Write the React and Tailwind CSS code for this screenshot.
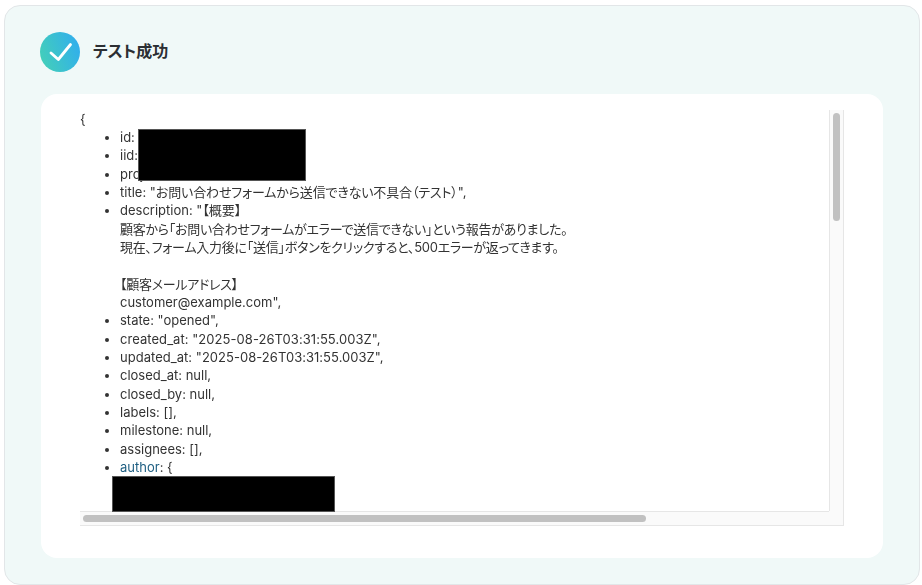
export default function App() {
  return (
    <div className="w-[922px] h-[585px] bg-white pt-[5px] pl-[4px] font-['Inter','Noto_Sans_CJK_JP',sans-serif] [font-feature-settings:'palt']">
      <div className="w-[916px] h-[580px] rounded-[16px] border border-[#e2e6e8] bg-[#f0f9f8] pt-[26px] pl-[35px]">
        <div className="flex items-center gap-[13px] h-[40px]">
          <div className="w-[40px] h-[40px] rounded-full bg-[linear-gradient(70deg,#45d2b4,#2fabf2)] flex items-center justify-center">
            <svg width="40" height="40" viewBox="0 0 40 40" fill="none">
              <path d="M11 21L18.3 27.5L30.5 12.5" stroke="white" strokeWidth="2.8" strokeLinecap="round" strokeLinejoin="round" />
            </svg>
          </div>
          <div className="text-[16px] font-semibold text-[#2b2f33] -mt-[3px]">テスト成功</div>
        </div>
        <div className="mt-[22px] ml-[1px] w-[842px] h-[464px] rounded-[16px] bg-white pt-[16px] pl-[39px]">
          <div className="relative w-[764px] h-[416px] grid grid-cols-[749px_15px] grid-rows-[401px_15px] overflow-hidden">
            <div className="overflow-hidden text-[13px] leading-[18.33px] text-[#333333] whitespace-nowrap transform-gpu">
              <div className="-mt-[0.4px]">{"{"}</div>
              <ul className="list-disc pl-[40px]">
                <li>id: </li>
                <li>iid: </li>
                <li>project_id: </li>
                <li>title: "<span className="tracking-[-0.15px]">お問い合わせフォームから送信できない不具合（テスト）</span>",</li>
                <li>
                  description: "【概要】
                  <br />
                  <span className="tracking-[-0.28px]">顧客から「お問い合わせフォームがエラーで送信できない」という報告がありました。</span>
                  <br />
                  <span className="tracking-[-0.26px]">現在、フォーム入力後に「送信」ボタンをクリックすると、500エラーが返ってきます。</span>
                  <br />
                  <br />
                  <span className="tracking-[-0.28px]">【顧客メールアドレス】</span>
                  <br />
                  customer@example.com",
                </li>
                <li>state: "opened",</li>
                <li className="tracking-[0.05px]">created_at: "2025-08-26T03:31:55.003Z",</li>
                <li className="tracking-[0.03px]">updated_at: "2025-08-26T03:31:55.003Z",</li>
                <li>closed_at: null,</li>
                <li>closed_by: null,</li>
                <li>labels: [],</li>
                <li>milestone: null,</li>
                <li>assignees: [],</li>
                <li>
                  <span className="text-[#1f5f82]">author</span>: {"{"}
                </li>
              </ul>
            </div>
            <div className="border-x border-[#e6e6e6] bg-[#fafafa] pt-[3px] px-[3px]">
              <div className="w-[7px] h-[108px] rounded-full bg-[#c1c1c1]"></div>
            </div>
            <div className="border-y border-[#e6e6e6] bg-[#fafafa] pt-[3px] pl-[3px]">
              <div className="w-[563px] h-[7px] rounded-full bg-[#c1c1c1]"></div>
            </div>
            <div className="bg-[#fafafa] border-b border-r border-[#e6e6e6]"></div>
            <div className="absolute left-[58px] top-[19px] w-[168px] h-[52px] bg-black border border-[#555555]"></div>
            <div className="absolute left-[32px] top-[366px] w-[223px] h-[36px] bg-black border border-[#555555]"></div>
          </div>
        </div>
      </div>
    </div>
  );
}
